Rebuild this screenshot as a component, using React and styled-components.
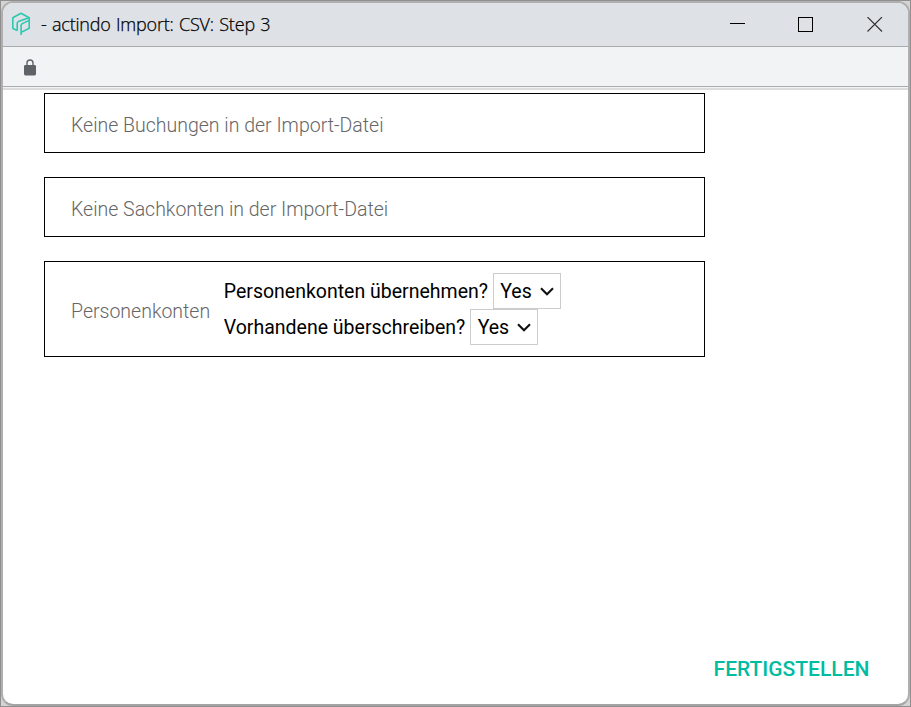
import React from 'react';
import styled, { createGlobalStyle } from 'styled-components';

const GlobalStyle = createGlobalStyle`
  * { box-sizing: border-box; }
  html, body { margin: 0; padding: 0; overflow: hidden; }
`;

const Backdrop = styled.div`
  width: 911px;
  height: 707px;
  border: 1px solid #8f8f8f;
  background: #d4d4d4;
  font-family: Roboto, sans-serif;
  font-size: 19.5px;
  color: #000;
`;

const Window = styled.div`
  width: 909px;
  height: 705px;
  display: flex;
  flex-direction: column;
  border: 2px solid #b0aeae;
  border-bottom-color: #a4a4a4;
  border-radius: 12px;
  background: #fff;
  overflow: hidden;
`;

const TitleBar = styled.header`
  height: 44px;
  flex: none;
  display: flex;
  align-items: center;
  background: #dee1e6;
  border-bottom: 1px solid #a9abad;
`;

const Logo = styled.svg`
  width: 20px;
  height: 25px;
  margin: 0 10px 0 8px;
`;

const Title = styled.h1`
  margin: 0;
  padding-bottom: 1px;
  flex: 1;
  font: 300 18px/24px "Open Sans", sans-serif;
  letter-spacing: -0.2px;
  word-spacing: 0.9px;
  -webkit-text-stroke: 0.25px #000;
  white-space: pre;
`;

const Controls = styled.div`
  display: flex;
  gap: 53px;
  margin-right: 25px;
`;

const ControlIcon = styled.svg`
  display: block;
  width: 16px;
  height: 16px;
`;

const AddressBar = styled.div`
  height: 43px;
  flex: none;
  display: flex;
  align-items: flex-start;
  padding: 12px 0 0 20px;
  background: linear-gradient(#f1f3f4 39px, #a9abad 39px, #a9abad 40px, #f1f3f4 40px, #f1f3f4 41px, #dcdcdc 41px);
`;

const LockIcon = styled.svg`
  width: 14px;
  height: 17px;
`;

const Content = styled.main`
  flex: 1;
  display: flex;
  flex-direction: column;
  align-items: flex-start;
  gap: 24px;
  padding: 3px 36px 20px 41px;
`;

const Section = styled.section`
  width: 661px;
  height: ${({ $height }) => $height}px;
  display: flex;
  align-items: center;
  padding-left: 26px;
  border: 1px solid #000;
`;

const Label = styled.span`
  padding-top: 6px;
  font-weight: 300;
  line-height: 24px;
  color: #666;
  white-space: nowrap;
`;

const Options = styled.div`
  margin-left: 13.6px;
`;

const Option = styled.label`
  display: flex;
  align-items: center;
  height: 36px;
  gap: 4.8px;
  white-space: nowrap;
`;

const SelectBox = styled.button`
  width: 68px;
  height: 36px;
  display: flex;
  align-items: center;
  justify-content: space-between;
  padding: 0 6px 0 6.5px;
  border: 1px solid #ccc;
  background: #fff;
  color: #000;
  font: inherit;
`;

const Chevron = styled.svg`
  width: 14px;
  height: 9px;
`;

const Finish = styled.button`
  align-self: flex-end;
  margin-top: auto;
  padding: 0 2.6px 0 0;
  border: 0;
  background: none;
  color: #00bca0;
  font: 500 21px/30px Roboto, sans-serif;
`;

function YesSelect() {
  return (
    <SelectBox type="button">
      Yes
      <Chevron viewBox="0 0 14 9" fill="none" stroke="#111" strokeWidth="2.1">
        <path d="M1 1.2 7 7.2l6-6" />
      </Chevron>
    </SelectBox>
  );
}

export default function App() {
  return (
    <Backdrop>
      <GlobalStyle />
      <Window>
        <TitleBar>
          <Logo viewBox="0 0 20 25" fill="none" stroke="#2cc9b0" strokeWidth="1.6" strokeLinejoin="round">
            <path d="M6 18.6 1.8 16.2V5.8L10 1.2l8.2 4.6v10.4l-8 4.2" />
            <path d="M6.2 18.8V11.4c0-.9.4-1.4 1.2-1.8L17.8 5.8" />
            <path d="M10.1 22.9V13.4c0-.9.4-1.4 1.2-1.8l6.7-3.2" />
          </Logo>
          <Title>-&nbsp;actindo Import: CSV: Step 3</Title>
          <Controls>
            <ControlIcon viewBox="0 0 16 16" stroke="#000" shapeRendering="crispEdges">
              <path d="M1 6.5h15" />
            </ControlIcon>
            <ControlIcon viewBox="0 0 16 16" fill="none" stroke="#000" shapeRendering="crispEdges">
              <path d="M.5.5h14v14H.5z" />
            </ControlIcon>
            <ControlIcon viewBox="0 0 16 16" stroke="#333" strokeWidth="1.1">
              <path d="m.5 0 14.5 14.5M15 0 .5 14.5" />
            </ControlIcon>
          </Controls>
        </TitleBar>
        <AddressBar>
          <LockIcon viewBox="0 0 14 17">
            <rect x="1" y="6" width="12" height="10.5" rx="1.4" fill="#5f6368" />
            <path d="M4 6.5V4a3 3 0 0 1 6 0v2.5" fill="none" stroke="#5f6368" strokeWidth="1.4" />
          </LockIcon>
        </AddressBar>
        <Content>
          <Section $height={60}><Label>Keine Buchungen in der Import-Datei</Label></Section>
          <Section $height={60}><Label>Keine Sachkonten in der Import-Datei</Label></Section>
          <Section $height={96}>
            <Label>Personenkonten</Label>
            <Options>
              <Option>Personenkonten übernehmen?<YesSelect /></Option>
              <Option>Vorhandene überschreiben?<YesSelect /></Option>
            </Options>
          </Section>
          <Finish type="button">FERTIGSTELLEN</Finish>
        </Content>
      </Window>
    </Backdrop>
  );
}
